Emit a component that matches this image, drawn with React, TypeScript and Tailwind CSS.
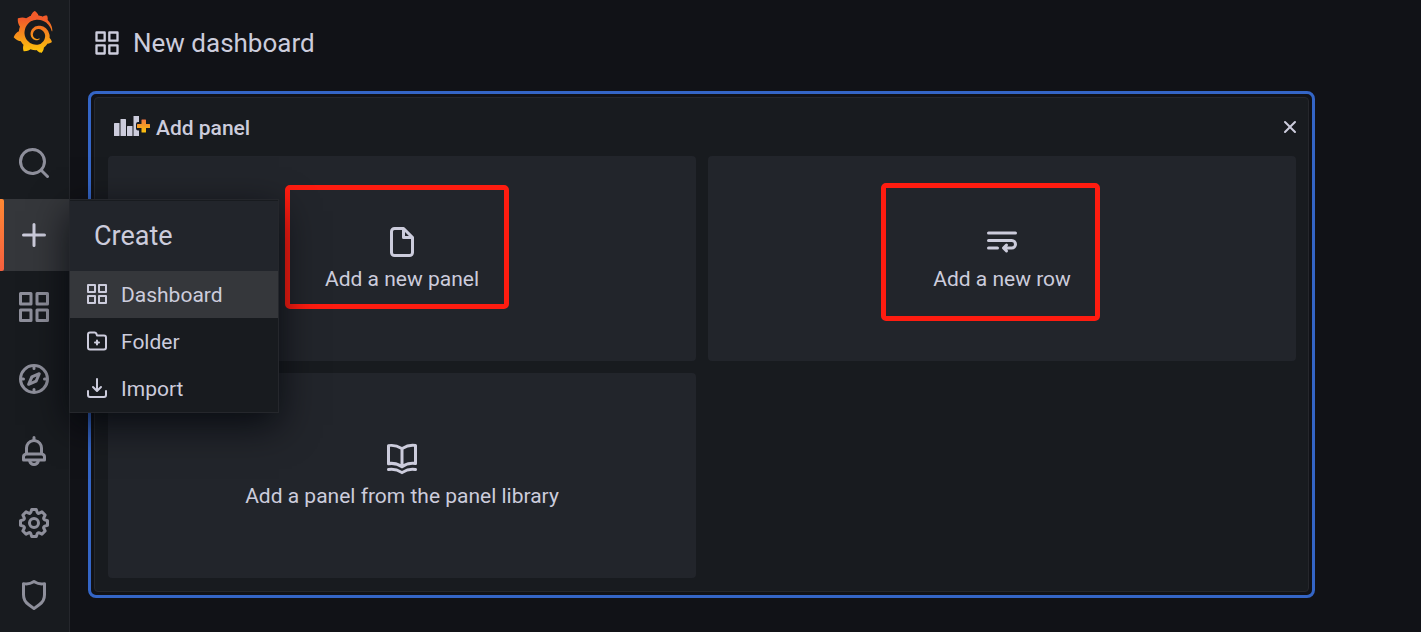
import React from 'react';
import { SiGrafana } from 'react-icons/si';

const icons = {
  apps: 'M10,13H3a1,1,0,0,0-1,1v7a1,1,0,0,0,1,1h7a1,1,0,0,0,1-1V14A1,1,0,0,0,10,13ZM9,20H4V15H9ZM21,2H14a1,1,0,0,0-1,1v7a1,1,0,0,0,1,1h7a1,1,0,0,0,1-1V3A1,1,0,0,0,21,2ZM20,9H15V4h5Zm1,4H14a1,1,0,0,0-1,1v7a1,1,0,0,0,1,1h7a1,1,0,0,0,1-1V14A1,1,0,0,0,21,13Zm-1,7H15V15h5ZM10,2H3A1,1,0,0,0,2,3v7a1,1,0,0,0,1,1h7a1,1,0,0,0,1-1V3A1,1,0,0,0,10,2ZM9,9H4V4H9Z',
  search: 'M21.71,20.29,18,16.61A9,9,0,1,0,16.61,18l3.68,3.68a1,1,0,0,0,1.42,0A1,1,0,0,0,21.71,20.29ZM11,18a7,7,0,1,1,7-7A7,7,0,0,1,11,18Z',
  plus: 'M19,11H13V5a1,1,0,0,0-2,0v6H5a1,1,0,0,0,0,2h6v6a1,1,0,0,0,2,0V13h6a1,1,0,0,0,0-2Z',
  compass: 'M12,2A10,10,0,1,0,22,12,10,10,0,0,0,12,2Zm1,17.93V19a1,1,0,0,0-2,0v.93A8,8,0,0,1,4.07,13H5a1,1,0,0,0,0-2H4.07A8,8,0,0,1,11,4.07V5a1,1,0,0,0,2,0V4.07A8,8,0,0,1,19.93,11H19a1,1,0,0,0,0,2h.93A8,8,0,0,1,13,19.93ZM15.14,7.55l-5,2.12a1,1,0,0,0-.52.52l-2.12,5a1,1,0,0,0,.21,1.1,1,1,0,0,0,.7.29.93.93,0,0,0,.4-.08l5-2.12a1,1,0,0,0,.52-.52l2.12-5a1,1,0,0,0-1.31-1.31Zm-2.49,5.1-2.28,1,1-2.28,2.28-1Z',
  bell: 'M18,13.18V10a6,6,0,0,0-5-5.91V3a1,1,0,0,0-2,0V4.09A6,6,0,0,0,6,10v3.18A3,3,0,0,0,4,16v2a1,1,0,0,0,1,1H8.14a4,4,0,0,0,7.72,0H19a1,1,0,0,0,1-1V16A3,3,0,0,0,18,13.18ZM8,10a4,4,0,0,1,8,0v3H8Zm4,10a2,2,0,0,1-1.72-1h3.44A2,2,0,0,1,12,20Zm6-3H6V16a1,1,0,0,1,1-1H17a1,1,0,0,1,1,1Z',
  cog: 'M21.32,9.55l-1.89-.63.89-1.78A1,1,0,0,0,20.13,6L18,3.87a1,1,0,0,0-1.15-.19l-1.78.89-.63-1.89A1,1,0,0,0,13.5,2h-3a1,1,0,0,0-.95.68L8.92,4.57,7.14,3.68A1,1,0,0,0,6,3.87L3.87,6a1,1,0,0,0-.19,1.15l.89,1.78-1.89.63A1,1,0,0,0,2,10.5v3a1,1,0,0,0,.68.95l1.89.63-.89,1.78A1,1,0,0,0,3.87,18L6,20.13a1,1,0,0,0,1.15.19l1.78-.89.63,1.89a1,1,0,0,0,.95.68h3a1,1,0,0,0,.95-.68l.63-1.89,1.78.89A1,1,0,0,0,18,20.13L20.13,18a1,1,0,0,0,.19-1.15l-.89-1.78,1.89-.63A1,1,0,0,0,22,13.5v-3A1,1,0,0,0,21.32,9.55ZM20,12.78l-1.2.4A2,2,0,0,0,17.64,16l.57,1.14-1.1,1.1L16,17.64a2,2,0,0,0-2.79,1.16l-.4,1.2H11.22l-.4-1.2A2,2,0,0,0,8,17.64l-1.14.57-1.1-1.1L6.36,16A2,2,0,0,0,5.2,13.18L4,12.78V11.22l1.2-.4A2,2,0,0,0,6.36,8L5.79,6.89l1.1-1.1L8,6.36A2,2,0,0,0,10.82,5.2l.4-1.2h1.56l.4,1.2A2,2,0,0,0,16,6.36l1.14-.57,1.1,1.1L17.64,8a2,2,0,0,0,1.16,2.79l1.2.4ZM12,8a4,4,0,1,0,4,4A4,4,0,0,0,12,8Zm0,6a2,2,0,1,1,2-2A2,2,0,0,1,12,14Z',
  shield: 'M19.63,3.65a1,1,0,0,0-.84-.2,8,8,0,0,1-6.22-1.27,1,1,0,0,0-1.14,0A8,8,0,0,1,5.21,3.45a1,1,0,0,0-.84.2A1,1,0,0,0,4,4.43v7.45a9,9,0,0,0,3.77,7.33l3.65,2.6a1,1,0,0,0,1.16,0l3.65-2.6A9,9,0,0,0,20,11.88V4.43A1,1,0,0,0,19.63,3.65ZM18,11.88a7,7,0,0,1-2.93,5.7L12,19.77,8.93,17.58A7,7,0,0,1,6,11.88V5.58a10,10,0,0,0,6-1.39,10,10,0,0,0,6,1.39Z',
  folderPlus: 'M14,12.5H13v-1a1,1,0,0,0-2,0v1H10a1,1,0,0,0,0,2h1v1a1,1,0,0,0,2,0v-1h1a1,1,0,0,0,0-2Zm5-7H12.72l-.32-1a3,3,0,0,0-2.84-2H5a3,3,0,0,0-3,3v13a3,3,0,0,0,3,3H19a3,3,0,0,0,3-3V8.5A3,3,0,0,0,19,5.5Zm1,13a1,1,0,0,1-1,1H5a1,1,0,0,1-1-1V5.5a1,1,0,0,1,1-1H9.56a1,1,0,0,1,.95.68l.54,1.64A1,1,0,0,0,12,7.5h7a1,1,0,0,1,1,1Z',
  importIcon: 'M21,14a1,1,0,0,0-1,1v4a1,1,0,0,1-1,1H5a1,1,0,0,1-1-1V15a1,1,0,0,0-2,0v4a3,3,0,0,0,3,3H19a3,3,0,0,0,3-3V15A1,1,0,0,0,21,14Zm-9.71,1.71a1,1,0,0,0,.33.21.94.94,0,0,0,.76,0,1,1,0,0,0,.33-.21l4-4a1,1,0,0,0-1.42-1.42L13,12.59V3a1,1,0,0,0-2,0v9.59l-2.29-2.3a1,1,0,1,0-1.42,1.42Z',
  file: 'M20,8.94a1.31,1.31,0,0,0-.06-.27l0-.09a1.07,1.07,0,0,0-.19-.28h0l-6-6h0a1.07,1.07,0,0,0-.28-.19l-.09,0L13.06,2H7A3,3,0,0,0,4,5V19a3,3,0,0,0,3,3H17a3,3,0,0,0,3-3V9S20,9,20,8.94ZM14,5.41,16.59,8H14ZM18,19a1,1,0,0,1-1,1H7a1,1,0,0,1-1-1V5A1,1,0,0,1,7,4h5V9a1,1,0,0,0,1,1h5Z',
  wrapText: 'M3,7H21a1,1,0,0,0,0-2H3A1,1,0,0,0,3,7ZM9,15H3a1,1,0,0,0,0,2H9a1,1,0,0,0,0-2Zm9.5-5H3a1,1,0,0,0,0,2H18.5a1.5,1.5,0,0,1,0,3H15.41l.3-.29a1,1,0,0,0-1.42-1.42l-2,2a1,1,0,0,0-.21.33,1,1,0,0,0,0,.76,1,1,0,0,0,.21.33l2,2a1,1,0,0,0,1.42,0,1,1,0,0,0,0-1.42l-.3-.29H18.5a3.5,3.5,0,0,0,0-7Z',
  book: 'M21.17,2.06A13.1,13.1,0,0,0,19,1.87a12.94,12.94,0,0,0-7,2.05,12.94,12.94,0,0,0-7-2,13.1,13.1,0,0,0-2.17.19,1,1,0,0,0-.83,1v12a1,1,0,0,0,1.17,1,10.9,10.9,0,0,1,8.25,1.91l.12.07.11,0a.91.91,0,0,0,.7,0l.11,0,.12-.07A10.9,10.9,0,0,1,20.83,16,1,1,0,0,0,22,15V3A1,1,0,0,0,21.17,2.06ZM11,15.35a12.87,12.87,0,0,0-6-1.48c-.33,0-.66,0-1,0v-10a8.69,8.69,0,0,1,1,0,10.86,10.86,0,0,1,6,1.8Zm9-1.44c-.34,0-.67,0-1,0a12.87,12.87,0,0,0-6,1.48V5.67a10.86,10.86,0,0,1,6-1.8,8.69,8.69,0,0,1,1,0Zm1.17,4.15A13.1,13.1,0,0,0,19,17.87a12.94,12.94,0,0,0-7,2.05,12.94,12.94,0,0,0-7-2.05,13.1,13.1,0,0,0-2.17.19A1,1,0,0,0,2,19.21a1,1,0,0,0,1.17.79,10.9,10.9,0,0,1,8.25,1.91,1,1,0,0,0,1.16,0A10.9,10.9,0,0,1,20.83,20,1,1,0,0,0,22,19.21,1,1,0,0,0,21.17,18.06Z',
  times: 'M13.41,12l4.3-4.29a1,1,0,1,0-1.42-1.42L12,10.59,7.71,6.29A1,1,0,0,0,6.29,7.71L10.59,12l-4.3,4.29a1,1,0,0,0,0,1.42,1,1,0,0,0,1.42,0L12,13.41l4.29,4.3a1,1,0,0,0,1.42,0,1,1,0,0,0,0-1.42Z',
};

type IconName = keyof typeof icons;

const Icon = ({ name, className }: { name: IconName; className: string }) => (
  <svg viewBox="0 0 24 24" fill="currentColor" className={className} aria-hidden="true">
    <path d={icons[name]} />
  </svg>
);

const AddPanelIcon = () => (
  <svg viewBox="0 0 36 22" className="w-9 h-[22px]" aria-hidden="true">
    <defs>
      <linearGradient id="plus-fill" x1="0" y1="0" x2="0" y2="1">
        <stop offset="0" stopColor="#f2753f" />
        <stop offset="1" stopColor="#fcc30b" />
      </linearGradient>
    </defs>
    <g fill="#ccccdc">
      <rect x="0" y="7" width="5.500" height="13" rx="0.5" />
      <rect x="6.500" y="3" width="5.500" height="17" rx="0.5" />
      <rect x="13" y="10" width="5.500" height="10" rx="0.5" />
      <path d="M19.500 0h5.500v6h-1a2 2 0 0 0-2 2v4.500a2 2 0 0 0 2 2h1v5.500h-5.500z" />
    </g>
    <path
      d="M28 3.500h3.500a.5.5 0 0 1 .5.500v4h3.500a.5.5 0 0 1 .5.500v3a.5.5 0 0 1-.5.500h-3.500v4a.5.5 0 0 1-.5.500h-3.500a.5.5 0 0 1-.5-.500v-4h-4a.5.5 0 0 1-.5-.500v-3a.5.5 0 0 1 .5-.500h4v-4a.5.5 0 0 1 .5-.500z"
      fill="url(#plus-fill)"
    />
  </svg>
);

const CreateMenu = () => {
  const items: { icon: IconName; label: string; active?: boolean }[] = [
    { icon: 'apps', label: 'Dashboard', active: true },
    { icon: 'folderPlus', label: 'Folder' },
    { icon: 'importIcon', label: 'Import' },
  ];

  return (
    <div className="absolute left-full top-0 z-20 w-[210px] border border-[#25272c] bg-[#181b1f] shadow-[0_12px_36px_rgba(1,4,9,0.75)]">
      <a
        href="#create"
        className="flex items-center h-[71px] pl-6 border-t border-[#181b1f] bg-[#22252b] text-[27px] leading-9 text-[#ccccdc]"
      >
        Create
      </a>
      <ul>
        {items.map((item) => (
          <li key={item.label}>
            <a
              href={`#${item.label.toLowerCase()}`}
              className={`flex items-center h-[47px] pl-[15px] gap-3 text-[21px] leading-8 text-[#ccccdc] ${item.active ? 'bg-[#35373b]' : ''}`}
            >
              <Icon name={item.icon} className="w-6 h-6 mb-px" />
              {item.label}
            </a>
          </li>
        ))}
      </ul>
    </div>
  );
};

const Sidebar = () => {
  const links: { icon: IconName; label: string }[] = [
    { icon: 'apps', label: 'Dashboards' },
    { icon: 'compass', label: 'Explore' },
    { icon: 'bell', label: 'Alerting' },
    { icon: 'cog', label: 'Configuration' },
    { icon: 'shield', label: 'Server Admin' },
  ];

  return (
    <nav className="relative z-10 flex flex-col w-[70px] shrink-0 bg-[#181b1f] border-r border-[#25272c]">
      <svg className="absolute w-0 h-0" aria-hidden="true">
        <defs>
          <linearGradient id="logo-fill" x1="0" y1="0" x2="0" y2="1">
            <stop offset="0.2" stopColor="#f15b2a" />
            <stop offset="1" stopColor="#fcc80a" />
          </linearGradient>
        </defs>
      </svg>
      <a href="#home" aria-label="Home" className="flex justify-center pt-[11px] pr-1 h-[127px]">
        <SiGrafana className="w-[42px] h-[42px]" fill="url(#logo-fill)" />
      </a>
      <a href="#search" aria-label="Search" className="flex items-center justify-center pr-0.5 h-[72px] text-[#8e8f9b]">
        <Icon name="search" className="w-9 h-9" />
      </a>
      <div className="relative">
        <button
          type="button"
          aria-label="Create"
          className="flex items-center justify-center pr-0.5 w-full h-[72px] bg-[#35373b] text-[#ccccdc]"
        >
          <Icon name="plus" className="w-9 h-9" />
        </button>
        <span className="absolute left-0 inset-y-0 w-1 rounded-r-xs bg-linear-to-b from-[#ff8833] to-[#f55f3e]"></span>
        <CreateMenu />
      </div>
      {links.map((link) => (
        <a
          key={link.label}
          href={`#${link.icon}`}
          aria-label={link.label}
          className="flex items-center justify-center pr-0.5 h-[72px] text-[#8e8f9b]"
        >
          <Icon name={link.icon} className="w-9 h-9" />
        </a>
      ))}
    </nav>
  );
};

const AddCard = ({ icon, label, children }: { icon: IconName; label: string; children?: React.ReactNode }) => (
  <div className="relative">
    <button
      type="button"
      className="flex flex-col items-center justify-center gap-1 w-full h-[205px] rounded-sm bg-[#22252b] text-[21px] leading-[30px] text-[#ccccdc]"
    >
      <Icon name={icon} className="w-9 h-9" />
      {label}
    </button>
    {children}
  </div>
);

const App = () => {
  return (
    <div className="flex min-h-screen bg-[#111217] text-[#ccccdc] font-[Roboto,sans-serif]">
      <Sidebar />

      <main className="flex-1 min-w-0 pl-[18px] pr-[106px] pb-8">
        <header className="flex items-center gap-3 h-[91px] pb-[6px] pl-[5px]">
          <Icon name="apps" className="w-7 h-7" />
          <h1 className="text-[26px] leading-9">New dashboard</h1>
        </header>

        {/* Add panel widget */}
        <section className="p-[3px] border-3 border-[#3465c6] rounded-lg">
          <div className="border border-[#25272c] rounded-sm bg-[#181b1f] pl-[13px] pr-3 pb-[13px]">
            <div className="flex items-center h-[58px] pl-[6px]">
              <AddPanelIcon />
              <h2 className="flex-1 pt-0.5 ml-[6px] text-[21px] leading-8 font-medium">Add panel</h2>
              <button type="button" aria-label="Close">
                <Icon name="times" className="-mr-[6px] w-6 h-6" />
              </button>
            </div>

            <div className="grid grid-cols-2 gap-3">
              <AddCard icon="file" label="Add a new panel">
                <span className="absolute left-[177px] top-[29px] w-[224px] h-[124px] border-5 border-[#ff1c10] rounded-[5px] pointer-events-none"></span>
              </AddCard>
              <AddCard icon="wrapText" label="Add a new row">
                <span className="absolute left-[173px] top-[27px] w-[219px] h-[138px] border-5 border-[#ff1c10] rounded-[5px] pointer-events-none"></span>
              </AddCard>
              <AddCard icon="book" label="Add a panel from the panel library" />
            </div>
          </div>
        </section>
      </main>
    </div>
  );
};

export default App;
